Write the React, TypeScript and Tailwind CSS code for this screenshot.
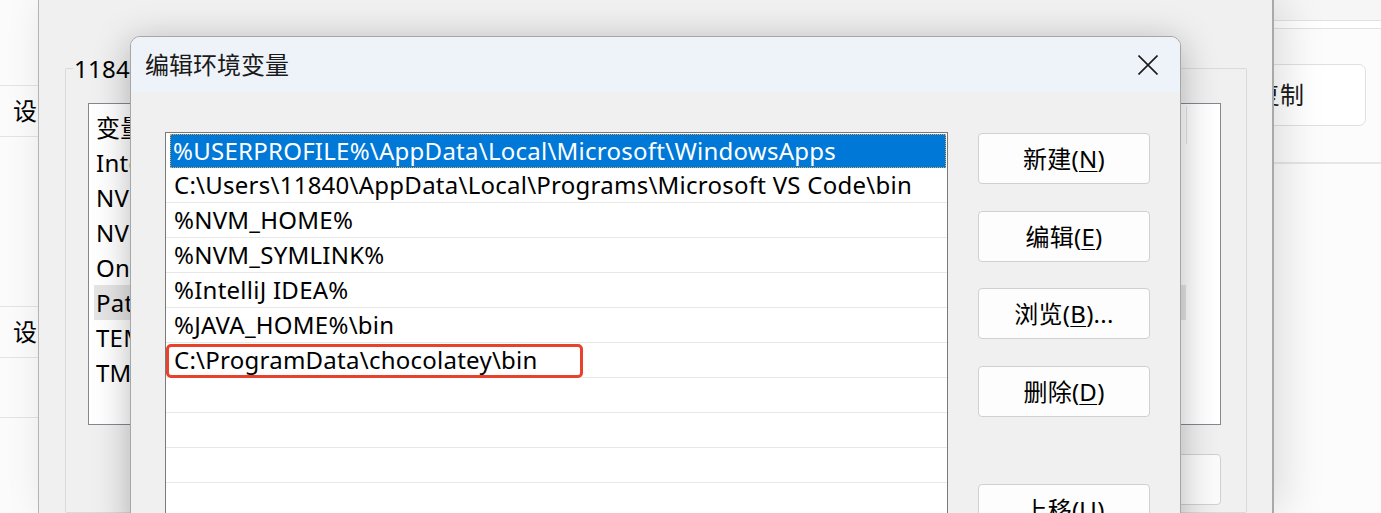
const paths = [
  "%USERPROFILE%\\AppData\\Local\\Microsoft\\WindowsApps",
  "C:\\Users\\11840\\AppData\\Local\\Programs\\Microsoft VS Code\\bin",
  "%NVM_HOME%",
  "%NVM_SYMLINK%",
  "%IntelliJ IDEA%",
  "%JAVA_HOME%\\bin",
  "C:\\ProgramData\\chocolatey\\bin",
  "",
  "",
  "",
  "",
];

const userVars = ["Inte", "NVM_HOME", "NVM_SYMLINK", "OneDrive", "Path", "TEMP", "TMP"];

const Key = ({ k }: { k: string }) => <span className="underline underline-offset-[3px] decoration-1">{k}</span>;

const WinButton = ({ label, k, tail = "", className = "" }: { label: string; k: string; tail?: string; className?: string }) => (
  <div className={`w-[172px] h-[51px] shrink-0 rounded-[4px] border border-[#d0d0d0] bg-[#fdfdfd] flex items-center justify-center text-[24px] text-black ${className}`}>
    <span>
      {label}(<Key k={k} />){tail}
    </span>
  </div>
);

export default function App() {
  return (
    <div className="relative w-[1381px] h-[513px] overflow-hidden bg-white font-['Noto_Sans','Noto_Sans_CJK_SC',sans-serif] text-black leading-none tracking-[0.25px]">
      {/* far-left settings window */}
      <div className="absolute left-0 top-0 w-[39px] h-[513px] overflow-hidden bg-[#fbfbfb] border-r border-[#bdbdbd] flex flex-col text-[24px] whitespace-nowrap">
        <div className="h-[86px] shrink-0 border-b border-[#e3e3e3]" />
        <div className="h-[51px] shrink-0 border-b border-[#e3e3e3] flex items-center pl-[13px]">设置</div>
        <div className="h-[170px] shrink-0 border-b border-[#e3e3e3]" />
        <div className="h-[51px] shrink-0 border-b border-[#e3e3e3] flex items-center pl-[13px]">设置</div>
        <div className="h-[60px] shrink-0 border-b border-[#e3e3e3]" />
      </div>

      {/* right window (behind) */}
      <div className="absolute left-[1100px] top-0 w-[281px] h-[513px] bg-[#fcfcfc] flex flex-col">
        <div className="h-[21px] shrink-0 bg-[#f6f6f6] border-b border-[#e2e2e2]" />
        <div className="h-[8px] shrink-0 bg-white border-b border-[#e2e2e2]" />
        <div className="mt-[35px] self-end mr-[15px] w-[172px] h-[62px] rounded-[7px] border border-[#e0e0e0] bg-white flex items-center justify-center text-[24px] text-[#1a1a1a]">
          复制
        </div>
        <div className="mt-[36px] border-b-2 border-[#e6e6e6]" />
      </div>

      {/* system properties / env vars window */}
      <div className="absolute left-[38px] top-0 w-[1236px] h-[513px] bg-[#f0f0f0] border-l border-[#b4b4b4] border-r-2 border-r-[#a9a9a9] shadow-[10px_0_40px_rgba(0,0,0,0.13)] flex flex-col">
        <div className="relative ml-[26px] mt-[68px] w-[1182px] h-[460px] border border-[#dadada] rounded-[2px] flex flex-col">
          <div className="absolute -top-[12px] left-[7px] bg-[#f0f0f0] px-[1px] text-[24px] text-black whitespace-nowrap">
            11840 的用户变量(<Key k="U" />)
          </div>
          <div className="ml-[22px] mt-[34px] w-[1133px] h-[322px] border border-[#828790] bg-white pt-[6px] text-[24px] flex flex-col whitespace-nowrap">
            <div className="relative h-[35px] shrink-0 flex items-center pl-[7px]">
              变量
              <div className="absolute left-[1097px] -top-[4px] h-[38px] border-l border-[#e5e5e5]" />
            </div>
            {userVars.map((v) =>
              v === "Path" ? (
                <div key={v} className="h-[35px] shrink-0 ml-[5px] w-[1092px] bg-[#e5e5e5] flex items-center pl-[2px]">
                  {v}
                </div>
              ) : (
                <div key={v} className="h-[35px] shrink-0 flex items-center pl-[7px]">
                  {v}
                </div>
              ),
            )}
          </div>
          <div className="mt-[29px] ml-[983px] w-[172px] h-[51px] rounded-[4px] border border-[#d0d0d0] bg-[#fbfbfb]" />
        </div>
      </div>

      {/* 编辑环境变量 dialog */}
      <div className="absolute left-[130px] top-[36px] w-[1051px] h-[500px] rounded-t-[10px] border border-[#a6a6a6] bg-[#f0f0f0] overflow-hidden shadow-[0_6px_36px_rgba(0,0,0,0.28)] flex flex-col">
        <div className="h-[55px] shrink-0 bg-[#eef3f9] flex items-center justify-between pl-[14px] pr-[22px]">
          <span className="text-[24px] tracking-normal text-[#1a1a1a]">编辑环境变量</span>
          <svg width="20" height="20" viewBox="0 0 20 20" className="text-[#1b1b1b]" aria-label="关闭">
            <path d="M0.5 0.5 L19.5 19.5 M19.5 0.5 L0.5 19.5" stroke="currentColor" strokeWidth="1.6" fill="none" />
          </svg>
        </div>
        <div className="flex pl-[34px] pt-[40px]">
          <div className="w-[783px] h-[420px] shrink-0 border border-[#7a7a7a] bg-white flex flex-col text-[24px]">
            {paths.map((p, i) =>
              i === 0 ? (
                <div key={i} className="h-[35px] shrink-0 pl-[4px] pr-[1px] pt-[1px]">
                  <div className="h-full bg-[#0078d7] text-white flex items-center pl-[3px] whitespace-nowrap outline-1 outline-dotted outline-[#e7a54a] -outline-offset-1">
                    {p}
                  </div>
                </div>
              ) : (
                <div key={i} className="relative h-[35px] shrink-0 border-b border-[#e8e8e8] flex items-center pl-[8px] whitespace-nowrap">
                  {p}
                  {i === 6 && (
                    <div className="absolute left-0 top-[1px] w-[417px] h-[34px] rounded-[5px] border-[3px] border-[#e8412c]" />
                  )}
                </div>
              ),
            )}
          </div>
          <div className="ml-[30px] pt-[1px] flex flex-col">
            <WinButton label="新建" k="N" />
            <WinButton label="编辑" k="E" className="mt-[27px]" />
            <WinButton label="浏览" k="B" tail="..." className="mt-[26px]" />
            <WinButton label="删除" k="D" className="mt-[27px]" />
            <WinButton label="上移" k="U" className="mt-[67px]" />
          </div>
        </div>
      </div>
    </div>
  );
}
